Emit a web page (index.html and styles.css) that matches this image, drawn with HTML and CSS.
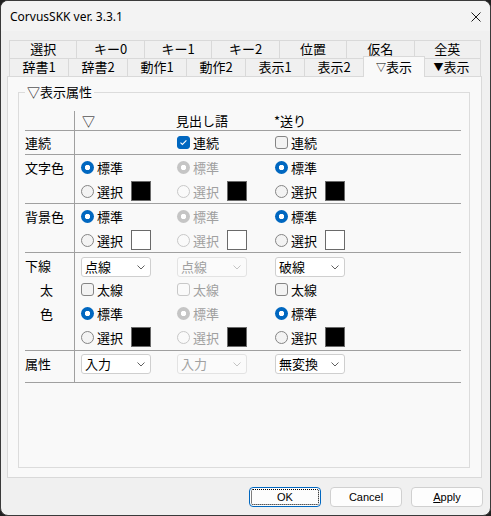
FILE: index.html
```html
<!DOCTYPE html>
<html lang="ja">
<head>
<meta charset="utf-8">
<title>CorvusSKK</title>
<link rel="stylesheet" href="styles.css">
</head>
<body>
<div class="window">
  <div class="titlebar">
    <span class="title">CorvusSKK ver. 3.3.1</span>
    <svg class="close" width="10" height="10" viewBox="0 0 10 10"><path d="M0.5 0.5L9.5 9.5M9.5 0.5L0.5 9.5" stroke="#1a1a1a" stroke-width="1"/></svg>
  </div>
  <div class="content">
    <div class="tabs">
      <div class="tabrow row1">
        <div class="tab">選択</div>
        <div class="tab">キー0</div>
        <div class="tab">キー1</div>
        <div class="tab">キー2</div>
        <div class="tab">位置</div>
        <div class="tab">仮名</div>
        <div class="tab">全英</div>
      </div>
      <div class="tabrow row2">
        <div class="tab">辞書1</div>
        <div class="tab">辞書2</div>
        <div class="tab">動作1</div>
        <div class="tab">動作2</div>
        <div class="tab">表示1</div>
        <div class="tab">表示2</div>
        <div class="tab sel"><span class="tri">▽</span>表示</div>
        <div class="tab"><span class="tri">▼</span>表示</div>
      </div>
    </div>
    <div class="page">
      <div class="group">
        <div class="group-title">▽表示属性</div>
        <div class="table">
          <div class="trow head">
            <div class="lab"></div>
            <div class="c1">▽</div>
            <div class="c2">見出し語</div>
            <div class="c3">*送り</div>
          </div>
          <div class="trow r-ren">
            <div class="lab"><div class="line">連続</div></div>
            <div class="c1"></div>
            <div class="c2"><div class="line"><span class="check on"><svg width="11" height="11" viewBox="0 0 11 11"><path d="M2.5 5.6L4.4 7.5L8.4 3.4" fill="none" stroke="#fff" stroke-width="1.1"/></svg></span>連続</div></div>
            <div class="c3"><div class="line"><span class="check"></span>連続</div></div>
          </div>
          <div class="trow r-two">
            <div class="lab"><div class="line">文字色</div></div>
            <div class="c1">
              <div class="line"><span class="radio on"></span>標準</div>
              <div class="line"><span class="radio"></span>選択<span class="sw black"></span></div>
            </div>
            <div class="c2">
              <div class="line dis-t"><span class="radio on dis"></span>標準</div>
              <div class="line dis-t"><span class="radio dis"></span>選択<span class="sw black"></span></div>
            </div>
            <div class="c3">
              <div class="line"><span class="radio on"></span>標準</div>
              <div class="line"><span class="radio"></span>選択<span class="sw black"></span></div>
            </div>
          </div>
          <div class="trow r-two">
            <div class="lab"><div class="line">背景色</div></div>
            <div class="c1">
              <div class="line"><span class="radio on"></span>標準</div>
              <div class="line"><span class="radio"></span>選択<span class="sw white"></span></div>
            </div>
            <div class="c2">
              <div class="line dis-t"><span class="radio on dis"></span>標準</div>
              <div class="line dis-t"><span class="radio dis"></span>選択<span class="sw white"></span></div>
            </div>
            <div class="c3">
              <div class="line"><span class="radio on"></span>標準</div>
              <div class="line"><span class="radio"></span>選択<span class="sw white"></span></div>
            </div>
          </div>
          <div class="trow r-ul">
            <div class="lab">
              <div class="line">下線</div>
              <div class="line ind">太</div>
              <div class="line ind">色</div>
            </div>
            <div class="c1">
              <div class="line sel-line"><div class="select"><span>点線</span><svg width="8" height="5" viewBox="0 0 8 5"><path d="M0.5 0.5L4 4L7.5 0.5" fill="none" stroke="#606060"/></svg></div></div>
              <div class="line"><span class="check"></span>太線</div>
              <div class="line"><span class="radio on"></span>標準</div>
              <div class="line"><span class="radio"></span>選択<span class="sw black"></span></div>
            </div>
            <div class="c2">
              <div class="line sel-line"><div class="select dis"><span>点線</span><svg width="8" height="5" viewBox="0 0 8 5"><path d="M0.5 0.5L4 4L7.5 0.5" fill="none" stroke="#c4c4c4"/></svg></div></div>
              <div class="line dis-t"><span class="check dis"></span>太線</div>
              <div class="line dis-t"><span class="radio on dis"></span>標準</div>
              <div class="line dis-t"><span class="radio dis"></span>選択<span class="sw black"></span></div>
            </div>
            <div class="c3">
              <div class="line sel-line"><div class="select"><span>破線</span><svg width="8" height="5" viewBox="0 0 8 5"><path d="M0.5 0.5L4 4L7.5 0.5" fill="none" stroke="#606060"/></svg></div></div>
              <div class="line"><span class="check"></span>太線</div>
              <div class="line"><span class="radio on"></span>標準</div>
              <div class="line"><span class="radio"></span>選択<span class="sw black"></span></div>
            </div>
          </div>
          <div class="trow r-attr">
            <div class="lab"><div class="line">属性</div></div>
            <div class="c1"><div class="line sel-line"><div class="select"><span>入力</span><svg width="8" height="5" viewBox="0 0 8 5"><path d="M0.5 0.5L4 4L7.5 0.5" fill="none" stroke="#606060"/></svg></div></div></div>
            <div class="c2"><div class="line sel-line"><div class="select dis"><span>入力</span><svg width="8" height="5" viewBox="0 0 8 5"><path d="M0.5 0.5L4 4L7.5 0.5" fill="none" stroke="#c4c4c4"/></svg></div></div></div>
            <div class="c3"><div class="line sel-line"><div class="select"><span>無変換</span><svg width="8" height="5" viewBox="0 0 8 5"><path d="M0.5 0.5L4 4L7.5 0.5" fill="none" stroke="#606060"/></svg></div></div></div>
          </div>
        </div>
      </div>
    </div>
    <div class="buttons">
      <button class="btn default">OK</button>
      <button class="btn">Cancel</button>
      <button class="btn"><u>A</u>pply</button>
    </div>
  </div>
</div>
</body>
</html>
```

FILE: styles.css
```css
html, body {
  margin: 0;
  padding: 0;
  background: #202020;
}
body {
  font-family: "Noto Sans CJK JP", "Noto Sans", sans-serif;
  font-size: 13px;
  color: #000;
}
.window {
  width: 491px;
  height: 516px;
  box-sizing: border-box;
  border: 1px solid #3a3a3a;
  border-radius: 8px;
  overflow: hidden;
  background: #f0f0f0;
  display: flex;
  flex-direction: column;
}
.titlebar {
  height: 30px;
  flex: none;
  background: #f3f3f3;
  display: flex;
  align-items: center;
  justify-content: space-between;
  padding: 0 9px 0 9px;
}
.title {
  font-family: "Noto Sans", "Liberation Sans", sans-serif;
  font-size: 12px;
  line-height: 16px;
  margin-top: 1px;
}
.close {
  display: block;
  margin-top: 1px;
}
.content {
  flex: 1;
  display: flex;
  flex-direction: column;
  padding: 9px 8px 8px 6px;
  min-height: 0;
}
.tabs {
  margin: 0 1px 0 2px;
}
.tabrow {
  display: grid;
  height: 18px;
}
.row1 { grid-template-columns: repeat(7, 1fr); }
.row2 { grid-template-columns: repeat(8, 1fr); }
.tab {
  border-top: 1px solid #d9d9d9;
  border-left: 1px solid #d9d9d9;
  text-align: center;
  line-height: 16px;
  font-size: 13px;
  background: #f0f0f0;
  white-space: nowrap;
  overflow: hidden;
}
.tab:last-child {
  border-right: 1px solid #d9d9d9;
}
.tab.sel {
  margin: -2px -3px -1px 0;
  border-right: 1px solid #d9d9d9;
  background: #f9f9f9;
  position: relative;
  z-index: 1;
  line-height: 15px;
  padding-top: 2px;
}
.tri {
  font-size: 10px;
  vertical-align: 1px;
}
.page {
  flex: 1;
  border: 1px solid #d9d9d9;
  background: #f9f9f9;
  display: flex;
  flex-direction: column;
  min-height: 0;
}
.group {
  flex: 1;
  margin: 15px 11px 9px 10px;
  border: 1px solid #dcdcdc;
}
.group-title {
  width: fit-content;
  margin: -9px 0 0 6px;
  padding: 0 2px;
  background: #f9f9f9;
  line-height: 16px;
}
.table {
  margin: 11px 8px 0 6px;
}
.trow {
  display: flex;
  border-bottom: 1px solid #a0a0a0;
}
.lab {
  width: 50px;
  flex: none;
  box-sizing: border-box;
  border-right: 1px solid #a0a0a0;
}
.c1 {
  width: 102px;
  flex: none;
  box-sizing: border-box;
  padding-left: 6px;
}
.c2 {
  width: 98px;
  flex: none;
  box-sizing: border-box;
}
.c3 {
  flex: 1;
}
.head {
  height: 19px;
}
.head > div {
  line-height: 17px;
  padding-top: 1px;
}
.head .c1 {
  padding-left: 7px;
}
.head .c2 {
  margin-left: -1px;
}
.line {
  height: 24px;
  display: flex;
  align-items: center;
  white-space: nowrap;
}
.r-ren .line { height: 23px; }
.r-two { height: 48px; }
.r-ul { height: 97px; }
.r-attr { height: 31px; }
.ind {
  padding-left: 15px;
}
.sel-line {
  align-items: flex-start;
  padding-top: 4px;
  box-sizing: border-box;
}
.r-attr .sel-line {
  padding-top: 3px;
}
.dis-t {
  color: #a0a0a0;
}
.radio {
  width: 13px;
  height: 13px;
  border-radius: 50%;
  box-sizing: border-box;
  border: 1px solid #858585;
  background: #f3f3f3;
  margin-right: 3px;
  flex: none;
}
.radio.dis {
  border-color: #c8c8c8;
  background: #fafafa;
}
.radio.on {
  border: none;
  background: radial-gradient(circle at center, #fff 0 2.4px, #0067c0 3px);
}
.radio.on.dis {
  background: radial-gradient(circle at center, #fff 0 2.4px, #c5c5c5 3px);
}
.check {
  width: 13px;
  height: 13px;
  border-radius: 3px;
  box-sizing: border-box;
  border: 1px solid #858585;
  background: #f3f3f3;
  margin-right: 3px;
  flex: none;
  display: flex;
}
.check.dis {
  border-color: #c8c8c8;
  background: #fafafa;
}
.check.on {
  background: #0067c0;
  border-color: #0067c0;
}
.sw {
  width: 20px;
  height: 20px;
  box-sizing: border-box;
  border: 1px solid #6a6a6a;
  margin-left: 8px;
  flex: none;
}
.sw.black { background: #000; }
.sw.white { background: #fff; }
.select {
  width: 70px;
  height: 20px;
  box-sizing: border-box;
  border: 1px solid #cfcfcf;
  border-radius: 3px;
  background: #fff;
  display: flex;
  align-items: center;
  justify-content: space-between;
  padding: 0 5px 0 3px;
  line-height: 16px;
}
.select.dis {
  border-color: #e3e3e3;
  background: #fbfbfb;
  color: #a0a0a0;
}
.buttons {
  display: flex;
  justify-content: flex-end;
  gap: 9px;
  margin: 9px -1px 0 0;
}
.btn {
  width: 72px;
  height: 20px;
  box-sizing: border-box;
  border: 1px solid #d0d0d0;
  border-radius: 4px;
  background: #fdfdfd;
  font-family: "Liberation Sans", Arial, sans-serif;
  font-size: 11px;
  color: #000;
  padding: 0;
  display: flex;
  align-items: center;
  justify-content: center;
}
.btn.default {
  border-color: #0067c0;
  outline: 1px dotted #000;
  outline-offset: -3px;
}
```
